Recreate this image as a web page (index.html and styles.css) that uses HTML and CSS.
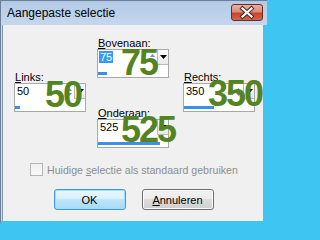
FILE: index.html
```html
<!DOCTYPE html>
<html>
<head>
<meta charset="utf-8">
<link rel="stylesheet" href="styles.css">
</head>
<body>
<div class="window">
  <div class="titlebar">
    <span class="title">Aangepaste selectie</span>
    <div class="close">
      <svg width="30" height="15" viewBox="0 0 30 15">
        <path d="M10.5 3.5 L19.5 11.5 M19.5 3.5 L10.5 11.5" stroke="#4a2a24" stroke-width="4.2" stroke-linecap="square" fill="none"/>
        <path d="M10.5 3.5 L19.5 11.5 M19.5 3.5 L10.5 11.5" stroke="#ffffff" stroke-width="2.2" stroke-linecap="square" fill="none"/>
      </svg>
    </div>
  </div>
  <div class="body">
    <div class="client">
      <div class="fields">
        <div class="field f-top">
          <div class="lbl"><u>B</u>ovenaan:</div>
          <div class="box">
            <div class="edit">
              <span class="val"><span class="sel">75</span></span>
              <span class="spin"><svg width="7" height="12" viewBox="0 0 7 12"><path d="M1 5 L3.5 2 L6 5 Z M1 7 L3.5 10 L6 7 Z" fill="#7088c8"/></svg></span>
              <span class="drop"><svg width="7" height="4" viewBox="0 0 7 4"><path d="M0 0 L7 0 L3.5 4 Z" fill="#000"/></svg></span>
            </div>
            <div class="track"><div class="bar" style="width:9px"></div></div>
          </div>
        </div>
        <div class="field f-left">
          <div class="lbl"><u>L</u>inks:</div>
          <div class="box">
            <div class="edit">
              <span class="val">50</span>
              <span class="spin"><svg width="7" height="12" viewBox="0 0 7 12"><path d="M1 5 L3.5 2 L6 5 Z M1 7 L3.5 10 L6 7 Z" fill="#7088c8"/></svg></span>
              <span class="drop"><svg width="7" height="4" viewBox="0 0 7 4"><path d="M0 0 L7 0 L3.5 4 Z" fill="#000"/></svg></span>
            </div>
            <div class="track"><div class="bar" style="width:5px"></div></div>
          </div>
        </div>
        <div class="field f-right">
          <div class="lbl"><u>R</u>echts:</div>
          <div class="box">
            <div class="edit">
              <span class="val">350</span>
              <span class="spin"><svg width="7" height="12" viewBox="0 0 7 12"><path d="M1 5 L3.5 2 L6 5 Z M1 7 L3.5 10 L6 7 Z" fill="#7088c8"/></svg></span>
              <span class="drop"><svg width="7" height="4" viewBox="0 0 7 4"><path d="M0 0 L7 0 L3.5 4 Z" fill="#000"/></svg></span>
            </div>
            <div class="track"><div class="bar" style="width:30px"></div></div>
          </div>
        </div>
        <div class="field f-bottom">
          <div class="lbl"><u>O</u>nderaan:</div>
          <div class="box">
            <div class="edit">
              <span class="val">525</span>
              <span class="spin"><svg width="7" height="12" viewBox="0 0 7 12"><path d="M1 5 L3.5 2 L6 5 Z M1 7 L3.5 10 L6 7 Z" fill="#7088c8"/></svg></span>
              <span class="drop"><svg width="7" height="4" viewBox="0 0 7 4"><path d="M0 0 L7 0 L3.5 4 Z" fill="#000"/></svg></span>
            </div>
            <div class="track"><div class="bar" style="width:62px"></div></div>
          </div>
        </div>
      </div>
      <label class="check"><span class="cb"></span><span class="cb-text">Huidige <u>s</u>electie als standaard gebruiken</span></label>
      <div class="buttons">
        <button class="btn btn-default">OK</button>
        <button class="btn"><u>A</u>nnuleren</button>
      </div>
    </div>
  </div>
  <div class="big n75">75</div>
  <div class="big n50">50</div>
  <div class="big n350">350</div>
  <div class="big n525">525</div>
</div>
</body>
</html>
```

FILE: styles.css
```css
html, body {
  margin: 0;
  padding: 0;
  background: #3ec5f1;
}
.window {
  position: relative;
  width: 267px;
  height: 225px;
  display: flex;
  flex-direction: column;
  overflow: hidden;
  font-family: "Liberation Sans", Arial, sans-serif;
  font-size: 11px;
  color: #000;
  background: #c0d4eb;
}
.titlebar {
  height: 25px;
  flex: none;
  display: flex;
  align-items: flex-start;
  background: linear-gradient(#b2c9e5, #c4d7ee);
  box-shadow: inset 1px 1px 0 #6e7e94;
}
.title {
  margin-top: 6px;
  padding-left: 7px;
  font-size: 12px;
  line-height: 14px;
  color: #000;
}
.close {
  margin-left: auto;
  margin-top: 4px;
  margin-right: 4px;
  width: 30px;
  height: 15px;
  border: 1px solid #6a2b21;
  border-radius: 3px;
  background: linear-gradient(#eab0a2 0%, #dc8b78 45%, #c7452c 55%, #d2664d 100%);
  display: flex;
}
.body {
  flex: 1;
  display: flex;
  border-left: 1px solid #6e7e94;
  padding-left: 1px;
  background: #c9dbef;
  border-right: 4px solid #3ec5f1;
  border-bottom: 4px solid #3ec5f1;
}
.client {
  flex: 1;
  background: #f0f0f0;
  border-left: 1px solid #7f98b8;
  padding-top: 12px;
  display: flex;
  flex-direction: column;
}
.fields {
  display: grid;
  grid-template-columns: 83px 86px 72px;
  grid-template-rows: 34px 36px 41px;
  margin-left: 11px;
}
.field {
  align-self: start;
  width: 72px;
}
.f-top { grid-column: 2; grid-row: 1; }
.f-left { grid-column: 1; grid-row: 2; }
.f-right { grid-column: 3; grid-row: 2; }
.f-bottom { grid-column: 2; grid-row: 3; }
.lbl {
  height: 12px;
  line-height: 12px;
  padding-left: 1px;
}
.box {
  box-sizing: border-box;
  width: 72px;
  height: 29px;
  border: 1px solid #a8a8a8;
  background: #fff;
  display: flex;
  flex-direction: column;
}
.edit {
  height: 15px;
  display: flex;
}
.val {
  flex: 1;
  padding-left: 2px;
  line-height: 14px;
  font-size: 11px;
}
.sel {
  background: #3399ff;
  color: #fff;
  padding: 0 1px;
  margin-left: -1px;
  display: inline-block;
  line-height: 12px;
  margin-top: 1px;
}
.spin {
  width: 9px;
  display: flex;
  align-items: center;
  justify-content: center;
}
.drop {
  width: 11px;
  box-sizing: border-box;
  border-left: 1px solid #b9b9b9;
  border-bottom: 1px solid #b9b9b9;
  background: linear-gradient(#fdfdfd, #e9e9e9);
  display: flex;
  align-items: center;
  justify-content: center;
}
.track {
  flex: 1;
  display: flex;
  flex-direction: column;
}
.bar {
  margin-top: 7px;
  height: 3px;
  background: #3b8fe8;
}
.check {
  display: flex;
  align-items: center;
  margin-top: 15px;
  padding-left: 27px;
  height: 13px;
  color: #8d8d8d;
  font-size: 10.6px;
}
.cb {
  box-sizing: border-box;
  width: 13px;
  height: 13px;
  border: 1px solid #b4b4b4;
  background: linear-gradient(#f0f0f0, #f8f8f8);
  margin-right: 4px;
  flex: none;
}
.buttons {
  display: flex;
  justify-content: center;
  gap: 16px;
  margin-top: 13px;
  padding-left: 1px;
}
.btn {
  box-sizing: border-box;
  width: 72px;
  height: 21px;
  padding: 0;
  font-family: "Liberation Sans", Arial, sans-serif;
  font-size: 11px;
  color: #000;
  border: 1px solid #707070;
  border-radius: 3px;
  background: linear-gradient(#f2f2f2 0%, #ebebeb 50%, #dddddd 50%, #cfcfcf 100%);
  box-shadow: inset 0 0 0 1px #fbfbfb;
}
.btn-default {
  border-color: #3c9ad6;
  background: linear-gradient(#eaf6fd 0%, #d9f0fc 50%, #bee6fd 50%, #a7d9f5 100%);
  box-shadow: inset 0 0 0 1px #9fe0f8;
}
.big {
  position: absolute;
  font-family: "Liberation Sans", Arial, sans-serif;
  font-weight: bold;
  font-size: 36px;
  line-height: 36px;
  letter-spacing: -2px;
  color: #548321;
}
.n75 { left: 121px; top: 45px; }
.n50 { left: 45px; top: 77px; }
.n350 { left: 208px; top: 76px; }
.n525 { left: 121px; top: 112px; }
```
